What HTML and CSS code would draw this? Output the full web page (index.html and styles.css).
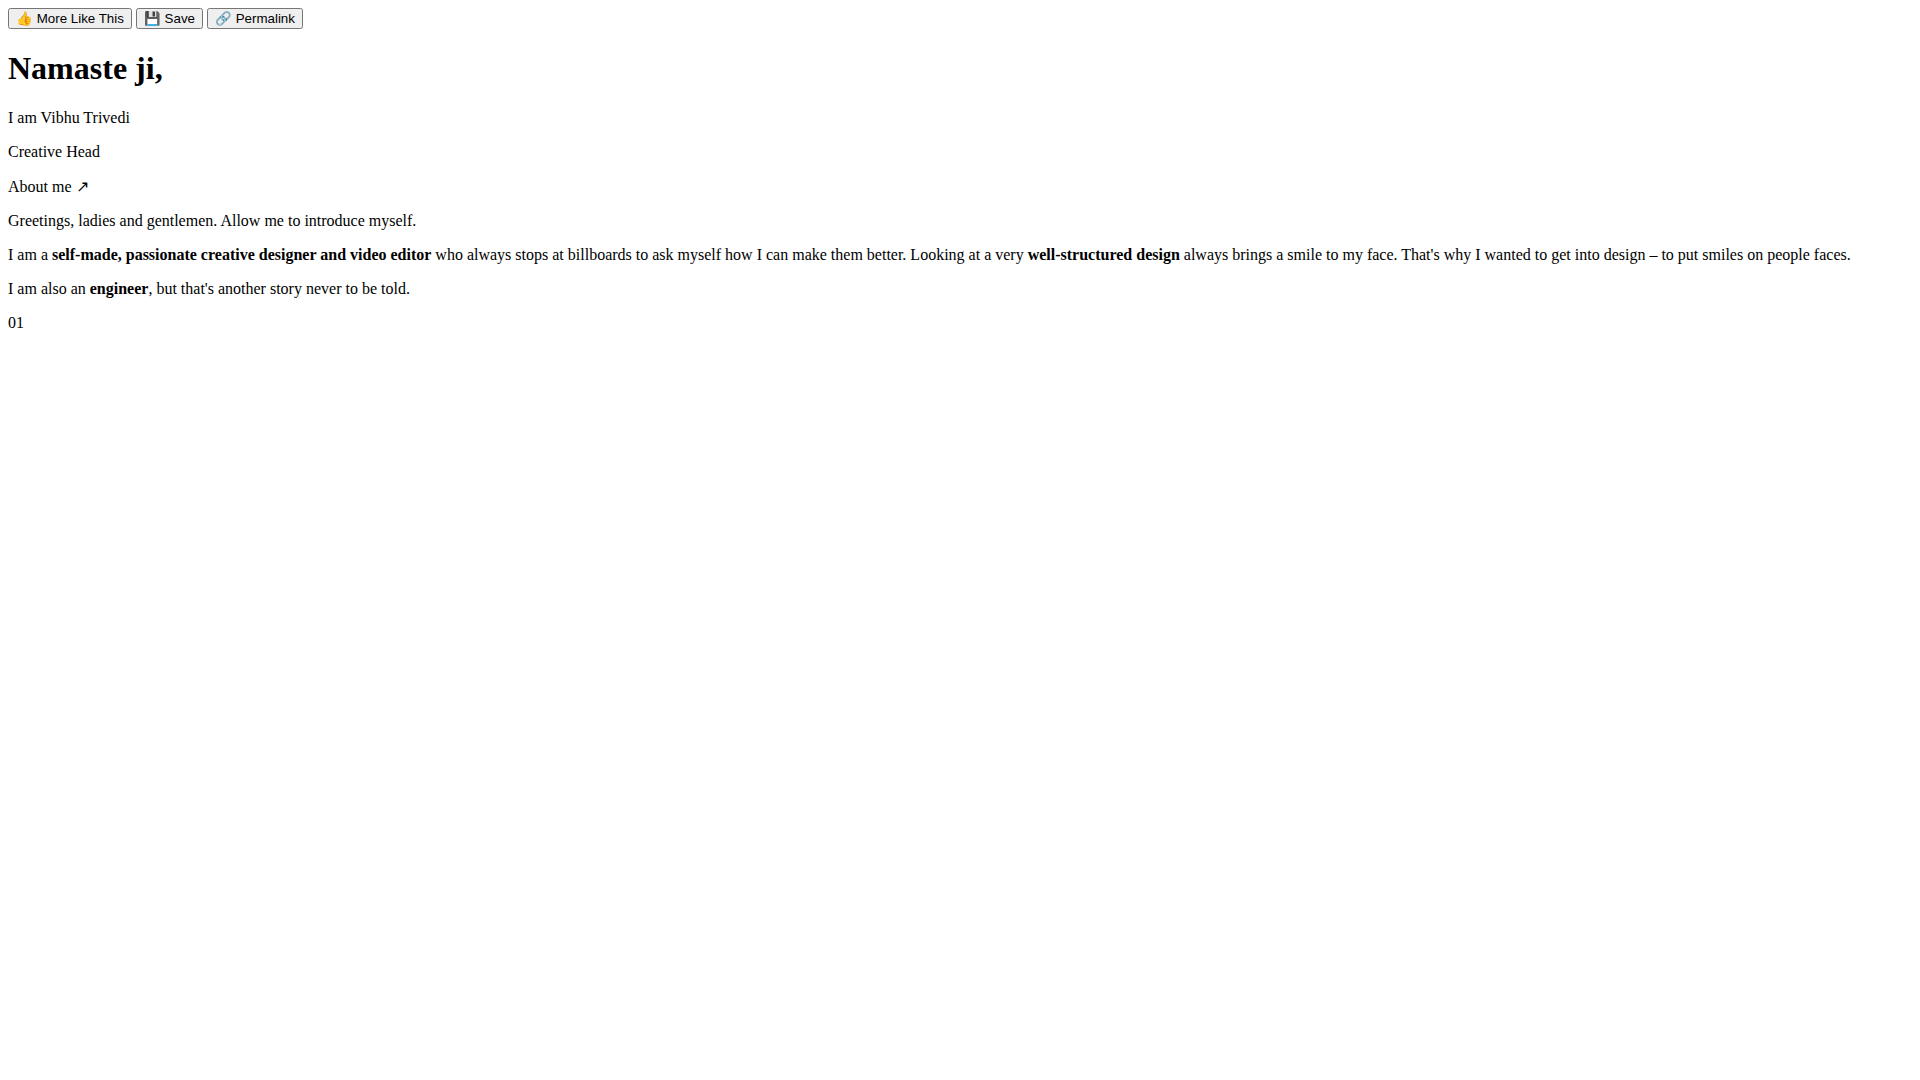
FILE: index.html
```
<!DOCTYPE html>
<html lang="en">
<head>
<meta charset="utf-8">
<meta name="viewport" content="width=device-width, initial-scale=1">
<title>Vibhu Trivedi</title>
<link rel="stylesheet" href="styles.css">
</head>
<body>
<div class="actions">
<button type="button">👍 More Like This</button>
<button type="button">💾 Save</button>
<button type="button">🔗 Permalink</button>
</div>
<main>
<h1>Namaste ji,</h1>
<p>I am Vibhu Trivedi</p>
<p>Creative Head</p>
<p>About me ↗</p>
<p>Greetings, ladies and gentlemen. Allow me to introduce myself.</p>
<p>I am a <strong>self-made, passionate creative designer and video editor</strong> who always stops at billboards to ask myself how I can make them better. Looking at a very <strong>well-structured design</strong> always brings a smile to my face. That's why I wanted to get into design – to put smiles on people faces.</p>
<p>I am also an <strong>engineer</strong>, but that's another story never to be told.</p>
<p>01</p>
</main>
</body>
</html>
```
FILE: styles.css
```
body {
  margin: 8px;
  background: #fff;
  color: #000;
  font-family: "Liberation Serif", "Times New Roman", serif;
  font-size: 16px;
}

.actions button {
  font-family: "Liberation Sans", Arial, sans-serif;
}
```
